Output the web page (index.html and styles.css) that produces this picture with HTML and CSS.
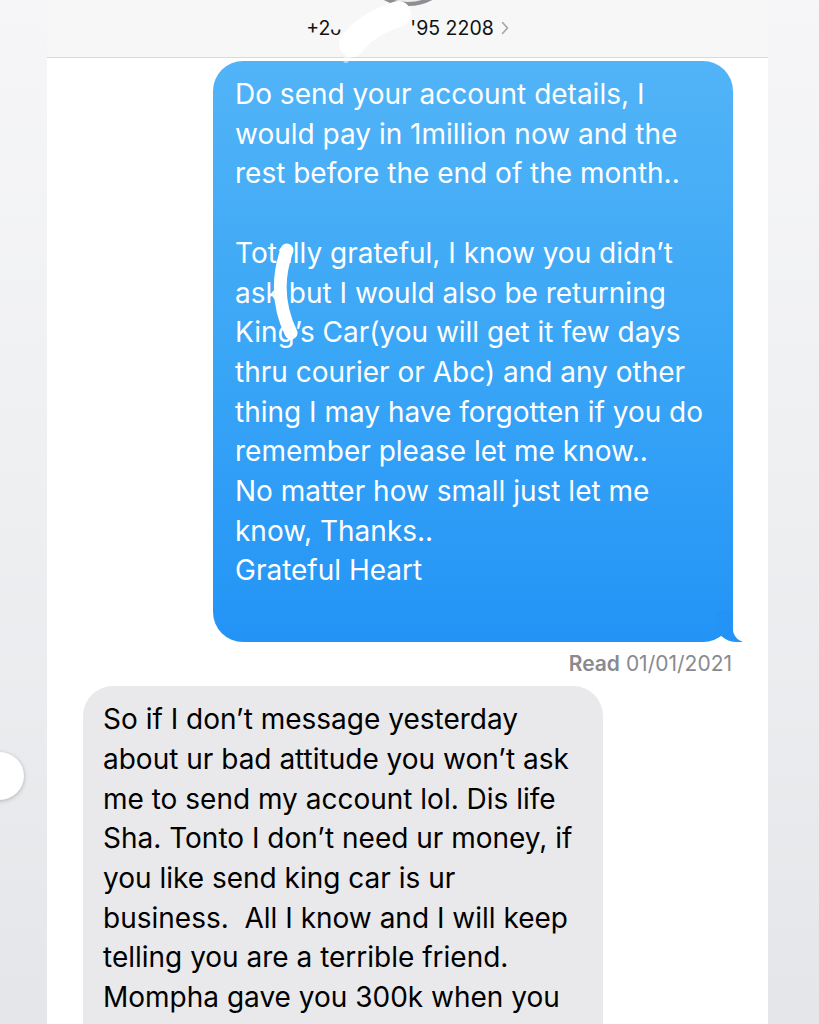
FILE: index.html
```html
<!DOCTYPE html>
<html lang="en">
<head>
    <meta charset="UTF-8">
    <meta name="viewport" content="width=device-width, initial-scale=1.0">
    <title>Messages</title>
    <link rel="stylesheet" href="styles.css">
</head>
<body>
    <div class="screen">
        <header class="top-bar">
            <div class="avatar"></div>
            <div class="contact">
                <span>+2ᴗ .</span>
                <span class="gap"></span>
                <span>'95 2208</span>
                <svg class="chev" width="8" height="14" viewBox="0 0 8 14">
                    <path d="M1.5 1.5 L6.5 7 L1.5 12.5" fill="none" stroke="#a3a3a8" stroke-width="1.6" stroke-linecap="round" stroke-linejoin="round"/>
                </svg>
            </div>
        </header>

        <main class="thread">
            <div class="bubble sent">
                Do send your account details, I<br>
                would pay in 1million now and the<br>
                rest before the end of the month..<br>
                <br>
                Totally grateful, I know you didn’t<br>
                ask but I would also be returning<br>
                King’s Car(you will get it few days<br>
                thru courier or Abc) and any other<br>
                thing I may have forgotten if you do<br>
                remember please let me know..<br>
                No matter how small just let me<br>
                know, Thanks..<br>
                Grateful Heart
            </div>
            <div class="receipt"><b>Read</b> 01/01/2021</div>
            <div class="bubble recv">
                So if I don’t message yesterday<br>
                about ur bad attitude you won’t ask<br>
                me to send my account lol. Dis life<br>
                Sha. Tonto I don’t need ur money, if<br>
                you like send king car is ur<br>
                business.&nbsp; All I know and I will keep<br>
                telling you are a terrible friend.<br>
                Mompha gave you 300k when you
            </div>
        </main>
    </div>

    <div class="knob"></div>

    <!-- white marker strokes used to hide parts of the screenshot -->
    <svg class="scribble" width="819" height="1024" viewBox="0 0 819 1024">
        <path d="M398 14 C380 20 362 30 352 44" fill="none" stroke="#fff" stroke-width="26" stroke-linecap="round"/>
        <path d="M354 50 C350 54 348 57 346 60" fill="none" stroke="#fff" stroke-width="6" stroke-linecap="round" opacity="0.5"/>
        <path d="M287 250 C279 272 276 302 291 333" fill="none" stroke="#fff" stroke-width="13" stroke-linecap="round"/>
    </svg>
</body>
</html>
```

FILE: styles.css
```css
html, body {
    margin: 0;
    padding: 0;
}
body {
    position: relative;
    width: 819px;
    height: 1024px;
    overflow: hidden;
    background: linear-gradient(180deg, #f6f6f8 0%, #eeeff1 50%, #e5e6e9 100%);
    font-family: Inter, "Liberation Sans", sans-serif;
}
.screen {
    margin-left: 47px;
    width: 721px;
    height: 1024px;
    overflow: hidden;
    background: #fff;
}
.top-bar {
    height: 57px;
    border-bottom: 1px solid #dadada;
    background: #f7f7f7;
    display: flex;
    flex-direction: column;
    align-items: center;
    overflow: hidden;
}
.avatar {
    flex: none;
    width: 94px;
    height: 94px;
    margin-top: -96px;
    border-radius: 50%;
    border: 4px solid #8e8e93;
    background: #ececef;
}
.contact {
    margin-top: 11px;
    display: flex;
    align-items: center;
    font-size: 19.5px;
    line-height: 22px;
    color: #111;
}
.contact .gap {
    width: 58px;
}
.chev {
    margin-left: 7px;
}
.thread {
    display: flex;
    flex-direction: column;
    padding: 3px 35px 0 36px;
}
.bubble {
    position: relative;
    width: 520px;
    box-sizing: border-box;
    border-radius: 30px;
    font-size: 28px;
    line-height: 39.7px;
}
.bubble.sent {
    align-self: flex-end;
    padding: 14px 12px 51px 22px;
    background: linear-gradient(180deg, #52b4f7 0%, #3aa6f6 50%, #2394f6 100%);
    color: #fff;
}
.bubble.sent::before {
    content: "";
    position: absolute;
    right: -9px;
    bottom: 0;
    width: 26px;
    height: 32px;
    background: #2394f6;
    border-bottom-left-radius: 21px 18px;
}
.bubble.sent::after {
    content: "";
    position: absolute;
    right: -34px;
    bottom: 0;
    width: 34px;
    height: 32px;
    background: #fff;
    border-bottom-left-radius: 13px;
}
.receipt {
    align-self: flex-end;
    margin: 11px 1px 11px 0;
    font-size: 21px;
    line-height: 22px;
    color: #8a8a8e;
}
.receipt b {
    font-weight: 600;
}
.bubble.recv {
    align-self: flex-start;
    padding: 14px 12px 60px 20px;
    background: #e9e9eb;
    color: #000;
}
.knob {
    position: absolute;
    left: -26px;
    top: 752px;
    width: 50px;
    height: 48px;
    border-radius: 50%;
    background: #fff;
    box-shadow: 0 1px 4px rgba(0,0,0,0.25);
}
.scribble {
    position: absolute;
    top: 0;
    left: 0;
    pointer-events: none;
}
```
